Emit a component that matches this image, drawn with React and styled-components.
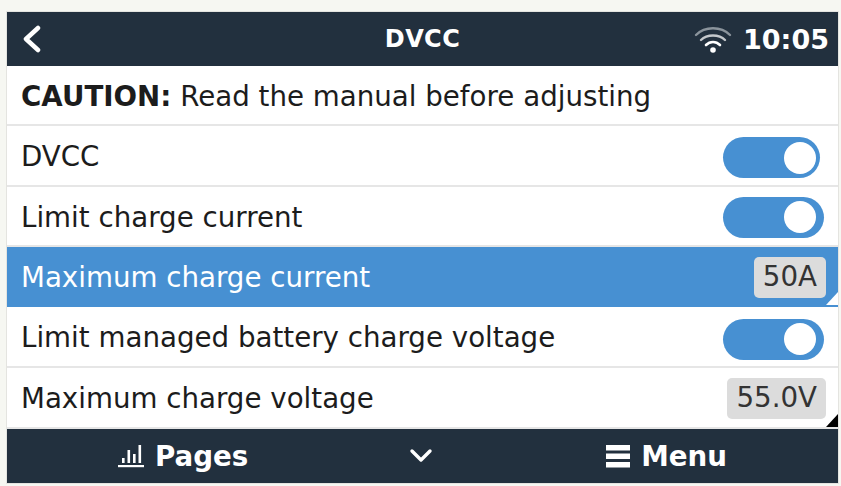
import React from 'react';
import styled, { createGlobalStyle } from 'styled-components';

const GlobalStyle = createGlobalStyle`
  html, body {
    margin: 0;
    padding: 0;
    background: #f6f7f2;
  }
`;

const Screen = styled.div`
  box-sizing: border-box;
  width: 841px;
  height: 486px;
  padding: 12px 3px 3px 7px;
  font-family: "DejaVu Sans", sans-serif;
  color: #1c1c1c;
`;

const Panel = styled.div`
  display: flex;
  flex-direction: column;
  width: 831px;
  height: 471px;
  background: #fff;
  box-shadow: 0 0 0 1px #e4e4e0;
`;

const TopBar = styled.header`
  display: grid;
  grid-template-columns: 1fr auto 1fr;
  align-items: center;
  flex: 0 0 54px;
  box-sizing: border-box;
  padding: 0 9px;
  background: #22303e;
  color: #fff;
  font-weight: 700;
`;

const BackSlot = styled.div`
  display: flex;
  padding-left: 6px;
`;

const Title = styled.div`
  font-size: 24px;
  letter-spacing: 0.4px;
`;

const Status = styled.div`
  display: flex;
  align-items: center;
  justify-content: flex-end;
  gap: 11px;
  font-size: 27px;
`;

const Row = styled.div`
  display: flex;
  align-items: center;
  justify-content: space-between;
  box-sizing: border-box;
  flex: 0 0 ${p => p.$height}px;
  padding: 2px ${p => p.$right || 14}px 0 14px;
  font-size: 27.7px;
  background: ${p => (p.$selected ? '#4790d2' : '#fff')};
  color: ${p => (p.$selected ? '#fff' : '#1c1c1c')};
  border-bottom: 2px solid ${p => (p.$selected ? '#4790d2' : '#e6e6e6')};
  position: relative;
`;

const Toggle = styled.div`
  display: flex;
  align-items: center;
  justify-content: flex-end;
  box-sizing: border-box;
  width: ${p => p.$width}px;
  height: 41px;
  margin-top: ${p => p.$drop || 0}px;
  padding-right: ${p => p.$gap}px;
  border-radius: 21px;
  background: #4790d2;
`;

const Knob = styled.div`
  width: 32px;
  height: 32px;
  border-radius: 50%;
  background: #fff;
`;

const Value = styled.div`
  padding: 2px 9px 3px;
  border-radius: 5px;
  background: #dcdcdc;
  color: #333;
  font-size: 27.7px;
  line-height: 36px;
`;

const Corner = styled.div`
  position: absolute;
  right: 0;
  bottom: 0;
  width: 0;
  height: 0;
  border-style: solid;
  border-width: 0 0 13px 12px;
  border-color: transparent transparent ${p => p.$color} transparent;
`;

const BottomBar = styled.footer`
  display: flex;
  align-items: center;
  justify-content: space-between;
  flex: 1;
  padding: 0 111px;
  background: #22303e;
  color: #fff;
  font-size: 27.7px;
  font-weight: 700;
`;

const BarButton = styled.div`
  display: flex;
  align-items: center;
  gap: ${p => p.$gap || 0}px;
  margin-right: ${p => p.$shift || 0}px;
`;

const BackIcon = () => (
  <svg width="20" height="28" viewBox="0 0 20 28" fill="none" stroke="#fff" strokeWidth="4.5" strokeLinecap="round" strokeLinejoin="round">
    <path d="M16 3 L4 14 L16 25" />
  </svg>
);

const WifiIcon = () => (
  <svg width="38" height="28" viewBox="0 0 38 28" fill="none" strokeLinecap="round">
    <path d="M2 10 C11 1 27 1 36 10" stroke="#8b949c" strokeWidth="2.4" />
    <path d="M7 15 C13 9 25 9 31 15" stroke="#c4c8cc" strokeWidth="2.4" />
    <path d="M12 20 C16 16 22 16 26 20" stroke="#fff" strokeWidth="2.6" />
    <circle cx="19" cy="25" r="2.8" fill="#fff" />
  </svg>
);

const PagesIcon = () => (
  <svg width="26" height="24" viewBox="0 0 26 24" fill="#fff">
    <rect x="0" y="21" width="26" height="2.2" />
    <rect x="4" y="14" width="2.6" height="5" />
    <rect x="9.5" y="6" width="2.6" height="13" />
    <rect x="15" y="10" width="2.6" height="9" />
    <rect x="20.5" y="1" width="2.6" height="18" />
  </svg>
);

const ChevronIcon = () => (
  <svg width="24" height="16" viewBox="0 0 24 16" fill="none" stroke="#fff" strokeWidth="3.4" strokeLinecap="round" strokeLinejoin="round">
    <path d="M3 3 L12 12 L21 3" />
  </svg>
);

const MenuIcon = () => (
  <svg width="24" height="24" viewBox="0 0 24 24" fill="#fff">
    <rect x="0" y="1" width="24" height="5.5" />
    <rect x="0" y="9.5" width="24" height="5.5" />
    <rect x="0" y="18" width="24" height="5.5" />
  </svg>
);

const App = () => (
  <>
    <GlobalStyle />
    <Screen>
      <Panel>
        <TopBar>
          <BackSlot><BackIcon /></BackSlot>
          <Title>DVCC</Title>
          <Status>
            <WifiIcon />
            10:05
          </Status>
        </TopBar>
        <Row $height={60}>
          <span><b>CAUTION:</b> Read the manual before adjusting</span>
        </Row>
        <Row $height={61} $right={18}>
          DVCC
          <Toggle $width={97} $gap={4} $drop={2}><Knob /></Toggle>
        </Row>
        <Row $height={60}>
          Limit charge current
          <Toggle $width={101} $gap={8}><Knob /></Toggle>
        </Row>
        <Row $height={60} $selected $right={12}>
          Maximum charge current
          <Value>50A</Value>
          <Corner $color="#fff" />
        </Row>
        <Row $height={61}>
          Limit managed battery charge voltage
          <Toggle $width={101} $gap={8} $drop={3}><Knob /></Toggle>
        </Row>
        <Row $height={61} $right={12}>
          Maximum charge voltage
          <Value>55.0V</Value>
          <Corner $color="#000" />
        </Row>
        <BottomBar>
          <BarButton $gap={11}><PagesIcon />Pages</BarButton>
          <BarButton $shift={12}><ChevronIcon /></BarButton>
          <BarButton $gap={11}><MenuIcon />Menu</BarButton>
        </BottomBar>
      </Panel>
    </Screen>
  </>
);

export default App;
